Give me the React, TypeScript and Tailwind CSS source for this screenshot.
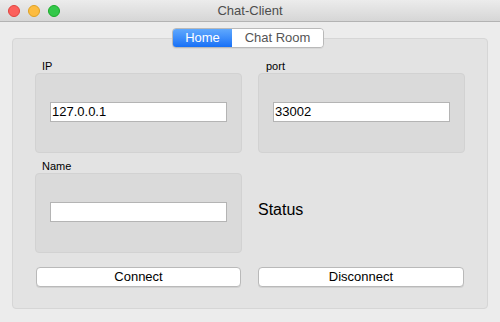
import React from "react";

const font = { fontFamily: '"Liberation Sans", Arial, sans-serif' };

function Field({ label, value, lpad }: { label: string; value: string; lpad: string }) {
  return (
    <div className="flex flex-col">
      <div className={`h-[14px] text-[11px] leading-[14px] text-black ${lpad}`}>{label}</div>
      <div className="h-[80px] rounded-[4px] border border-[#d2d2d2] bg-[#dadada] px-[14px] pt-[28px]">
        <div className="h-[20px] border border-[#b4b4b4] bg-white pl-[1px] text-[13px] leading-[18px] text-black">
          {value}
        </div>
      </div>
    </div>
  );
}

export default function App() {
  return (
    <div style={font} className="flex h-[322px] w-[500px] flex-col overflow-hidden bg-[#ececec]">
      {/* title bar */}
      <div className="relative flex h-[22px] shrink-0 items-center border-b border-[#b3b3b3] bg-gradient-to-b from-[#ececec] to-[#d6d6d6] px-[8px]">
        <div className="flex gap-[8px]">
          <div className="h-[12px] w-[12px] rounded-full border border-[#e0443e] bg-[#fc605c]" />
          <div className="h-[12px] w-[12px] rounded-full border border-[#dea123] bg-[#fdbc40]" />
          <div className="h-[12px] w-[12px] rounded-full border border-[#1aab29] bg-[#34c84a]" />
        </div>
        <div className="absolute inset-x-0 top-0 flex h-[21px] items-center justify-center text-[13px] text-[#4d4d4d]">
          Chat-Client
        </div>
      </div>

      {/* tabs */}
      <div className="relative z-10 flex justify-center pr-[4px] pt-[6px]">
        <div className="flex h-[20px] overflow-hidden rounded-[4px] border border-[#b9b9b9] text-[13px] leading-[18px] shadow-[0_1px_0_rgba(0,0,0,0.05)]">
          <div className="flex w-[59px] items-center justify-center bg-gradient-to-b from-[#5fa8fd] to-[#1670f6] text-white">
            Home
          </div>
          <div className="flex w-[91px] items-center justify-center bg-white text-[#555555]">Chat Room</div>
        </div>
      </div>

      {/* group box */}
      <div className="mx-[12px] -mt-[10px] h-[271px] rounded-[4px] border border-[#d6d6d6] bg-[#e3e3e3] px-[22px] pt-[20px]">
        <div className="grid grid-cols-2 gap-x-[16px]">
          <Field label="IP" value="127.0.0.1" lpad="pl-[7px]" />
          <Field label="port" value="33002" lpad="pl-[8px]" />
        </div>
        <div className="mt-[6px] grid grid-cols-2 gap-x-[16px]">
          <Field label="Name" value="" lpad="pl-[7px]" />
          <div className="flex h-[94px] items-center pt-[8px] text-[16px] text-black">Status</div>
        </div>
        <div className="mt-[14px] grid grid-cols-2 gap-x-[16px]">
          <button className="mx-[1px] h-[20px] rounded-[4px] border border-[#b9b9b9] bg-white text-[13px] leading-[18px] text-black shadow-[0_1px_0_rgba(0,0,0,0.08)]">
            Connect
          </button>
          <button className="mr-[1px] h-[20px] rounded-[4px] border border-[#b9b9b9] bg-white text-[13px] leading-[18px] text-black shadow-[0_1px_0_rgba(0,0,0,0.08)]">
            Disconnect
          </button>
        </div>
      </div>
    </div>
  );
}
